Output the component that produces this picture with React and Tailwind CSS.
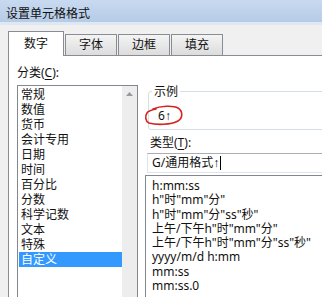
import React from 'react';

const categories = ['常规', '数值', '货币', '会计专用', '日期', '时间', '百分比', '分数', '科学记数', '文本', '特殊', '自定义'];

const formats = [
  'h:mm:ss',
  'h"时"mm"分"',
  'h"时"mm"分"ss"秒"',
  '上午/下午h"时"mm"分"',
  '上午/下午h"时"mm"分"ss"秒"',
  'yyyy/m/d h:mm',
  'mm:ss',
  'mm:ss.0',
];

const Arrow = () => <span className="font-['Liberation_Sans',sans-serif]">↑</span>;

export default function App() {
  return (
    <div className="w-[322px] h-[297px] overflow-hidden bg-[#f0f0f0] text-[12px] text-[#111] font-['Noto_Sans','Noto_Sans_CJK_SC',sans-serif]">
      <div className="h-[22px] pl-[6px] pt-[3px] flex items-center bg-gradient-to-b from-[#c8daf0] to-[#b6cbe7] font-['Noto_Sans_CJK_SC',sans-serif]">
        设置单元格格式
      </div>
      <div className="h-[3px] bg-[#dfe7f2]" />

      {/* tabs */}
      <div className="mt-[6px] pl-[8px] h-[24px] flex items-end">
        <div className="relative z-10 -mb-px w-[56px] h-[25px] bg-white border border-b-0 border-[#898c95] flex items-center justify-center leading-none">
          数字
        </div>
        {['字体', '边框', '填充'].map((t) => (
          <div
            key={t}
            className="ml-[1px] first:ml-0 w-[52px] h-[21px] bg-gradient-to-b from-[#f4f4f4] to-[#dcdcdc] border border-b-0 border-[#898c95] flex items-center justify-center leading-none"
          >
            {t}
          </div>
        ))}
      </div>

      {/* panel */}
      <div className="ml-[8px] w-[330px] h-[260px] bg-white border-l border-t border-[#898c95] flex">
        <div className="pl-[8px] pt-[9px]">
          <div className="leading-[15px]">
            分类(<span className="underline underline-offset-2">C</span>):
          </div>
          <div className="mt-[5px] w-[121px] h-[230px] border border-[#828790] flex">
            <div className="w-[104px] pl-[1px] pt-[1px]">
              {categories.map((c) => (
                <div
                  key={c}
                  className={
                    c === '自定义'
                      ? 'h-[15px] leading-[15px] pl-[2px] bg-[#3399ff] text-white'
                      : 'h-[15px] leading-[15px] pl-[2px]'
                  }
                >
                  {c}
                </div>
              ))}
            </div>
            <div className="ml-auto w-[15px] bg-[#ededed] flex flex-col items-center">
              <div className="h-[16px] flex items-center justify-center">
                <svg width="7" height="4" viewBox="0 0 7 4">
                  <path d="M0 4 L3.5 0 L7 4 Z" fill="#9a9a9a" />
                </svg>
              </div>
            </div>
          </div>
        </div>

        <div className="ml-[7px] w-[190px] flex flex-col">
          <fieldset className="mt-[28px] ml-[3px] w-[200px] h-[46px] border border-[#d5dfe5] rounded-[3px]">
            <legend className="ml-[3px] px-[2px] leading-[15px]">示例</legend>
            <div className="mt-[9px] pl-[9px] leading-[15px]">
              <span className="relative inline-block">
                6<Arrow />
                <svg
                  className="absolute left-[-14px] top-[-3px]"
                  width="40"
                  height="22"
                  viewBox="0 0 40 22"
                  fill="none"
                >
                  <path
                    d="M9 4 C16 1, 29 0, 34 3 C39 6, 39 13, 34 16 C27 20, 12 20, 5 18 C1 16, 1 11, 3 8 C4 6, 7 5, 12 4"
                    stroke="#d42320"
                    strokeWidth="1.6"
                    strokeLinecap="round"
                  />
                </svg>
              </span>
            </div>
          </fieldset>

          <div className="mt-[5px] ml-[5px] leading-[15px]">
            类型(<span className="underline underline-offset-2">T</span>):
          </div>
          <div className="mt-[3px] ml-[2px] w-[200px] h-[20px] border border-[#e2e3ea] border-t-[#abadb3] pl-[4px] flex items-center leading-none">
            G/通用格式<Arrow />
            <span className="inline-block ml-[1px] w-px h-[14px] bg-black" />
          </div>
          <div className="mt-[2px] w-[200px] h-[140px] border border-[#828790] pl-[6px] pt-[3px]">
            {formats.map((f) => (
              <div key={f} className="h-[14.3px] leading-[14.3px] whitespace-nowrap">
                {f}
              </div>
            ))}
          </div>
        </div>
      </div>
    </div>
  );
}
